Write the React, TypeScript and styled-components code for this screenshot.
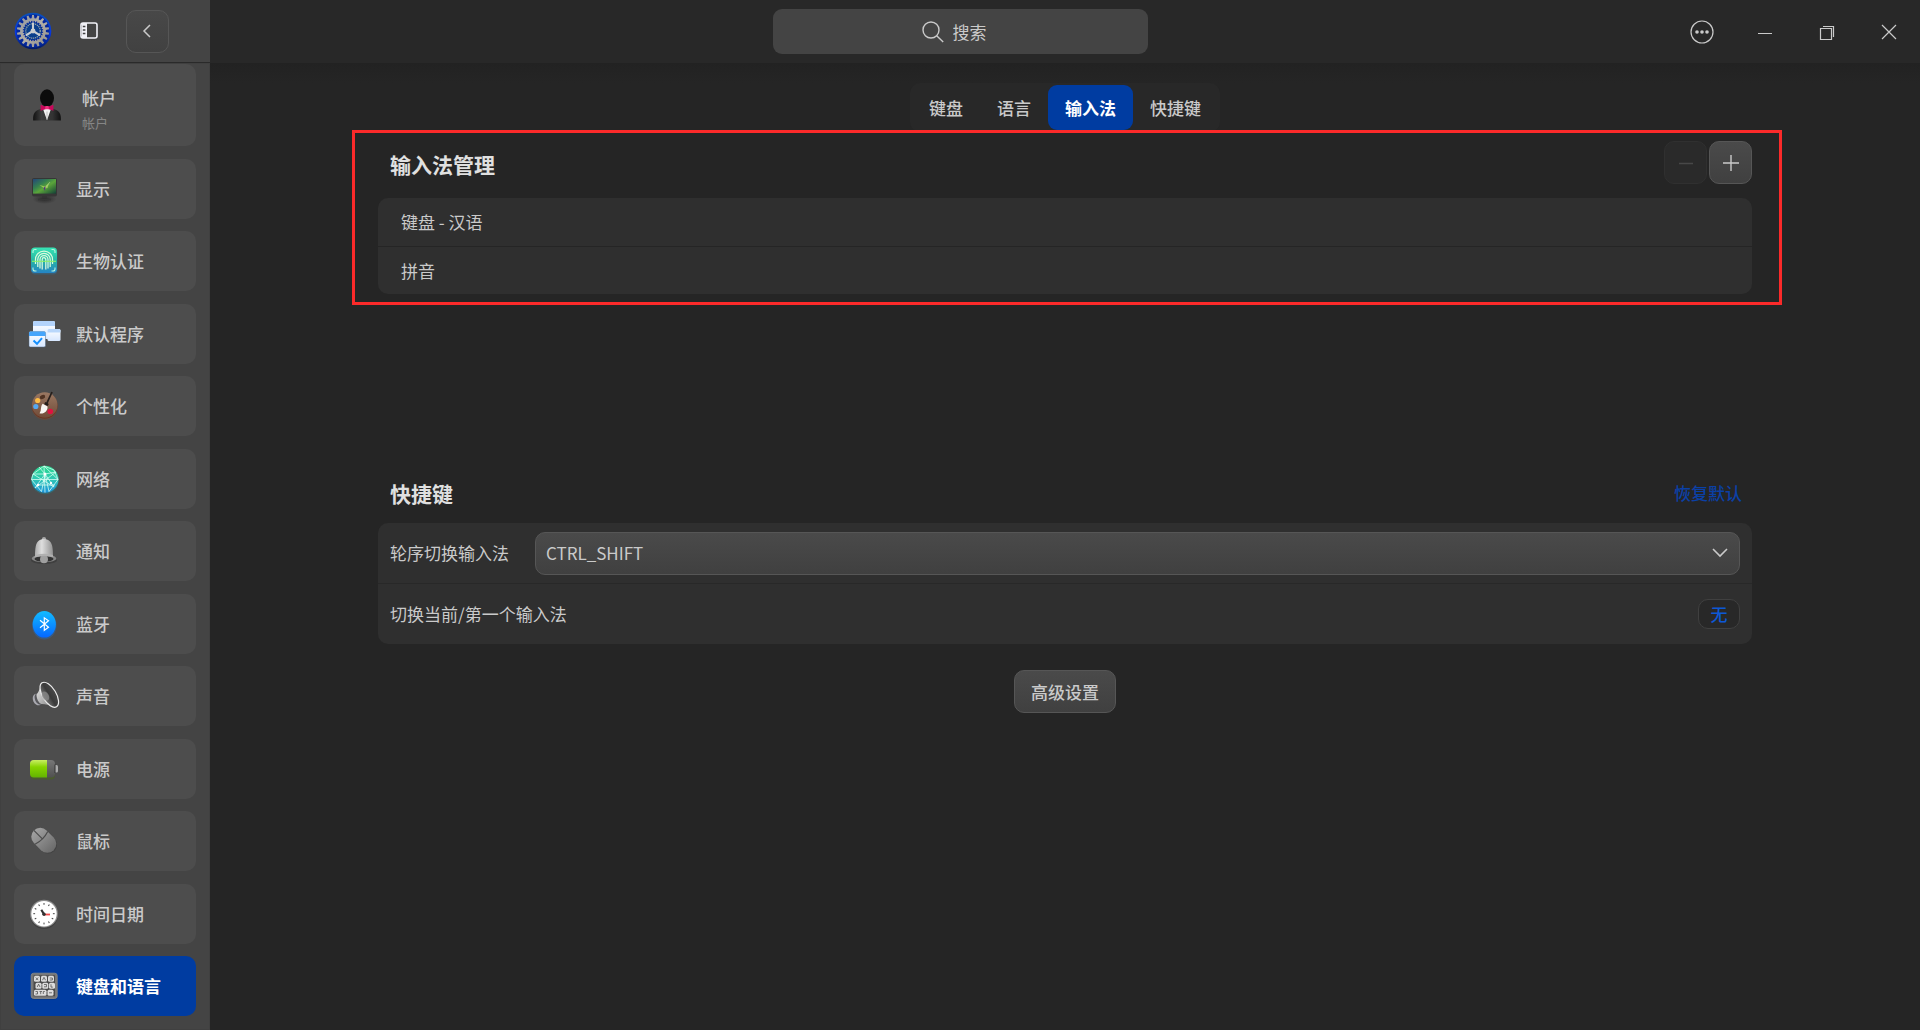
import React from "react";
import styled, { createGlobalStyle, css } from "styled-components";

const color = {
  page: "#252525",
  bar: "#282828",
  side: "#444444",
  card: "#4d4d4d",
  panel: "#2f2f2f",
  accent: "#003ca1",
  text: "#cacaca",
  heading: "#e0e0e0",
};

const GlobalStyle = createGlobalStyle`
  * { box-sizing: border-box; }
  body {
    margin: 0;
    background: ${color.page};
    color: ${color.text};
    font: 17px/26px "Noto Sans CJK SC", "Noto Sans", sans-serif;
  }
  button, input, select { font: inherit; color: inherit; margin: 0; }
  button { padding: 0; border: 0; background: none; cursor: pointer; }
  svg { display: block; overflow: visible; flex: none; }
`;

const Window = styled.div`
  display: flex;
  flex-direction: column;
  min-height: 100vh;
`;

const TopBar = styled.header`
  display: grid;
  grid-template-columns: 1fr 375px 1fr;
  align-items: center;
  height: 63px;
  background: ${color.bar};
`;

const SideTools = styled.div`
  display: flex;
  align-items: center;
  gap: 10px;
  width: 210px;
  height: 63px;
  padding: 0 14px;
  background: ${color.side};
  border-bottom: 1px solid #2a2a2a;
`;

const ToolButton = styled.button`
  display: grid;
  place-items: center;
  width: 54px;
  height: 42px;
`;

const gradientFrame = css`
  border: 1px solid #565656;
  border-radius: 10px;
  background: linear-gradient(#4a4a4a, #404040);
`;

const SquareButton = styled.button`
  display: grid;
  place-items: center;
  width: 43px;
  height: 43px;
  ${gradientFrame}
  &:disabled {
    border-color: #303030;
    background: #2a2a2a;
    color: #484848;
    cursor: default;
  }
`;

const BackButton = styled(SquareButton)`
  background: linear-gradient(#484848, #414141);
`;

const SearchBox = styled.label`
  display: flex;
  align-items: center;
  justify-content: center;
  gap: 9px;
  height: 45px;
  padding-right: 10px;
  border-radius: 9px;
  background: ${color.side};
  cursor: text;
`;

const SearchInput = styled.input`
  width: 36px;
  padding: 0;
  border: 0;
  outline: 0;
  background: none;
  &::placeholder { color: ${color.text}; opacity: 1; }
`;

const WindowControls = styled.div`
  display: flex;
  justify-content: flex-end;
`;

const ControlButton = styled.button`
  display: grid;
  place-items: center;
  width: 62px;
  height: 62px;
`;

const Body = styled.div`
  display: flex;
  flex: 1;
`;

const SideNav = styled.nav`
  display: flex;
  flex-direction: column;
  justify-content: space-between;
  gap: 8px;
  width: 210px;
  padding: 1px 14px 14px;
  background: ${color.side};
  box-shadow: inset 0 0 0 1px #404040;
`;

const NavItem = styled.a<{ $active?: boolean; $tall?: boolean }>`
  display: flex;
  align-items: center;
  gap: 16px;
  height: ${(p) => (p.$tall ? 82 : 60)}px;
  padding: 0 14px;
  border-radius: 10px;
  background: ${(p) => (p.$active ? color.accent : color.card)};
  color: ${(p) => (p.$active ? "#fff" : color.text)};
  font-weight: ${(p) => (p.$active ? 700 : 500)};
  text-decoration: none;
  white-space: nowrap;
`;

const AccountText = styled.span`
  display: flex;
  flex-direction: column;
  padding-top: 10px;
`;

const AccountNote = styled.small`
  color: #868686;
  font-size: 13px;
  font-weight: 400;
  line-height: 24px;
`;

const Content = styled.main`
  flex: 1;
  display: flex;
  flex-direction: column;
  align-items: center;
  padding: 20px 168px;
  background: linear-gradient(#222222, ${color.page} 20px);
`;

const TabList = styled.div`
  display: flex;
  padding: 2px;
  border-radius: 10px;
  background: #282828;
`;

const Tab = styled.button<{ $active?: boolean }>`
  height: 45px;
  padding: 0 17px;
  border-radius: 9px;
  font-weight: 500;
  ${(p) => p.$active && css`
    background: ${color.accent};
    color: #fff;
    font-weight: 700;
  `}
`;

const Section = styled.section`
  align-self: stretch;
`;

const MethodSection = styled(Section)`
  position: relative;
  min-height: 341px;
  padding-top: 9px;
`;

const Highlight = styled.div`
  position: absolute;
  inset: -2px -30px auto -26px;
  height: 175px;
  border: 3px solid #fb2a2a;
  pointer-events: none;
`;

const SectionHead = styled.div<{ $gap: number }>`
  display: flex;
  align-items: flex-end;
  justify-content: space-between;
  padding-left: 12px;
  margin-bottom: ${(p) => p.$gap}px;
`;

const Heading = styled.h2`
  margin: 0;
  color: ${color.heading};
  font-size: 21px;
  font-weight: 700;
  line-height: 40px;
`;

const ButtonPair = styled.div`
  display: flex;
  gap: 2px;
`;

const RestoreButton = styled.button`
  padding-right: 10px;
  color: #0b40a6;
  font-weight: 500;
  line-height: 40px;
`;

const Panel = styled.div`
  border-radius: 10px;
  background: ${color.panel};
`;

const MethodList = styled.ul`
  margin: 0;
  padding: 0;
  list-style: none;
  border-radius: 10px;
  background: ${color.panel};
`;

const MethodItem = styled.li`
  height: 48px;
  padding: 11px 23px;
  & + & { border-top: 1px solid #252525; }
`;

const SettingRow = styled.div`
  display: flex;
  align-items: center;
  justify-content: space-between;
  gap: 26px;
  height: 60px;
  padding: 0 12px;
  & + & {
    height: 61px;
    border-top: 1px solid #282828;
  }
`;

const SelectWrap = styled.div`
  position: relative;
  flex: 1;
  color: ${color.text};
`;

const Select = styled.select`
  display: block;
  width: 100%;
  height: 43px;
  padding: 0 40px 0 10px;
  appearance: none;
  ${gradientFrame}
`;

const SelectArrow = styled.svg`
  position: absolute;
  right: 13px;
  top: 16px;
  pointer-events: none;
`;

const KeyButton = styled.button`
  width: 42px;
  height: 30px;
  border: 1px solid #404040;
  border-radius: 10px;
  background: #282828;
  color: #0d58d6;
  font-weight: 500;
`;

const AdvancedButton = styled.button`
  height: 43px;
  margin-top: 26px;
  padding: 0 16px;
  font-weight: 500;
  ${gradientFrame}
`;

/* ---- icons ---- */

const Icon = ({ size = 32, children }: { size?: number; children: React.ReactNode }) => (
  <svg width={size} height={size} viewBox="0 0 32 32" aria-hidden="true">{children}</svg>
);

const Line = ({ size, d, width = 1.3 }: { size: number; d: string; width?: number }) => (
  <svg width={size} height={size} viewBox={`0 0 ${size} ${size}`} fill="none" stroke="currentColor" strokeWidth={width} aria-hidden="true">
    <path d={d} />
  </svg>
);

const gearPath = (teeth: number, outer: number, inner: number) => {
  const points: string[] = [];
  for (let i = 0; i < teeth; i++) {
    const steps: [number, number][] = [[-0.3, inner], [-0.17, outer], [0.17, outer], [0.3, inner]];
    steps.forEach(([t, r]) => {
      const a = ((i + t) / teeth) * Math.PI * 2 - Math.PI / 2;
      points.push(`${(20 + r * Math.cos(a)).toFixed(2)} ${(20 + r * Math.sin(a)).toFixed(2)}`);
    });
  }
  return `M${points.join("L")}Z`;
};

const Logo = () => (
  <svg width="38" height="38" viewBox="0 0 40 40" role="img" aria-label="控制中心">
    <defs>
      <linearGradient id="logoRim" x1="0" y1="0" x2="0" y2="1">
        <stop offset="0" stopColor="#0a50b4" /><stop offset=".55" stopColor="#0838e0" /><stop offset="1" stopColor="#021a60" />
      </linearGradient>
      <linearGradient id="logoMetal" x1="0" y1="0" x2="1" y2="1">
        <stop offset="0" stopColor="#8e949c" /><stop offset=".5" stopColor="#b3b0a8" /><stop offset="1" stopColor="#8b8986" />
      </linearGradient>
    </defs>
    <circle cx="20" cy="20" r="19.3" fill="url(#logoRim)" />
    <circle cx="20" cy="20" r="17.4" fill="#04279c" />
    <path fillRule="evenodd" fill="url(#logoMetal)" d={gearPath(18, 17, 13.6) + gearPath(24, 9.4, 10.8)} />
    <circle cx="20" cy="20" r="9.2" fill="#0a3f8c" />
    <circle cx="20" cy="20" r="7.6" fill="none" stroke="#9ba3ab" strokeWidth="1.3" strokeDasharray="1.3 .8" />
    <path d="M20 20V11M20 20l-7.5 4.500M20 20l7.500 4.500" stroke="#c9cdd0" strokeWidth="2.2" />
    <circle cx="20" cy="20" r="2.6" fill="#c9cdd0" />
  </svg>
);

const PanelIcon = () => (
  <svg width="18" height="18" viewBox="0 0 18 18" aria-hidden="true">
    <rect x="1" y="1" width="16" height="15" rx="2" fill="none" stroke="#f2f2f8" strokeWidth="1.6" />
    <path d="M2 1h5v15H2z" fill="#f2f2f8" />
    <path d="M2.8 4.500h2.600M2.800 8h2.600M2.800 11.500h2.600" stroke="#444" strokeWidth="1.4" />
  </svg>
);

const AccountIcon = () => (
  <Icon size={38}>
    <defs><linearGradient id="suit" x1="0" y1="0" x2="1" y2="0"><stop offset="0" stopColor="#111" /><stop offset=".3" stopColor="#3c3c3c" /><stop offset=".7" stopColor="#333" /><stop offset="1" stopColor="#111" /></linearGradient></defs>
    <path d="M4.300 29C4 23 6 20.600 11 19.200h10C26 20.600 28 23 27.700 29Z" fill="url(#suit)" />
    <path d="M12.500 19h7L16 28.800Z" fill="#f3f3f3" />
    <path d="M16 21.500v7" stroke="#aaa" strokeWidth=".6" />
    <ellipse cx="16" cy="10.200" rx="5.900" ry="7.400" fill="#0c0c0c" />
    <path d="M10.600 15.800l5.400 2 5.400-2v5L16 19.200l-5.400 1.600Z" fill="#c8085a" />
    <rect x="14.500" y="16.800" width="3" height="2.800" rx=".6" fill="#f0307e" />
  </Icon>
);

const DisplayIcon = () => (
  <Icon>
    <defs>
      <linearGradient id="screen" x1="0" y1="0" x2="1" y2="1"><stop offset="0" stopColor="#24457a" /><stop offset=".35" stopColor="#35804f" /><stop offset=".55" stopColor="#5ba53a" /><stop offset="1" stopColor="#123f36" /></linearGradient>
      <radialGradient id="base"><stop offset="0" stopColor="#222" stopOpacity=".8" /><stop offset="1" stopColor="#222" stopOpacity="0" /></radialGradient>
    </defs>
    <ellipse cx="16.500" cy="26" rx="12" ry="5" fill="url(#base)" />
    <path d="M14 22h5v3.500h-5z" fill="#333" />
    <path d="M10 26.500h13" stroke="#363636" strokeWidth="1.400" />
    <rect x="4" y="5" width="25" height="18.500" rx="2" fill="#363636" />
    <rect x="5" y="6" width="23" height="14.600" fill="url(#screen)" />
    <path d="M11.500 12l5.500 1.500 4-3.500-1.500 5-3 .5Z" fill="#9ccb55" />
    <path d="M17.500 13l-.5 5-1.500-3Z" fill="#56308a" />
    <path d="M18 14l4-5" stroke="#a8c890" strokeWidth=".7" />
  </Icon>
);

const BiometricIcon = () => (
  <Icon>
    <defs><linearGradient id="bio" x1="0" y1="0" x2="0" y2="1"><stop offset="0" stopColor="#37e5b5" /><stop offset=".5" stopColor="#27b6a4" /><stop offset="1" stopColor="#2584c6" /></linearGradient></defs>
    <rect x="3" y="3.500" width="26.400" height="26" rx="4" fill="#2478ac" opacity=".35" />
    <rect x="3" y="2.500" width="26" height="25.500" rx="4" fill="url(#bio)" />
    <path d="M5 8V6.500q0-2 2-2h1.500M27 8V6.500q0-2-2-2h-1.500M5 22.500V24q0 2 2 2h1.500M27 22.500V24q0 2-2 2h-1.500" fill="none" stroke="#b8f5df" strokeWidth="1.100" />
    <g fill="none" stroke="#d9fbdc" strokeWidth="1.250">
      <path d="M7.500 19v-4.500a8.500 8.500 0 0 1 17 0V19" />
      <path d="M9.800 22v-7.500a6.200 6.200 0 0 1 12.400 0V22" />
      <path d="M12 23.500v-9a4 4 0 0 1 8 0v9" />
      <path d="M14.200 24.500v-10a1.800 1.800 0 0 1 3.600 0v10" />
    </g>
    <path d="M4 16.300h24" stroke="#8df06a" strokeWidth="1.100" />
  </Icon>
);

const DefaultAppsIcon = () => (
  <Icon>
    <defs><linearGradient id="win" x1="0" y1="0" x2="0" y2="1"><stop offset="0" stopColor="#fff" /><stop offset="1" stopColor="#d7e7ff" /></linearGradient></defs>
    <rect x="5" y="3" width="22" height="18" rx="1.500" fill="url(#win)" />
    <path d="M5 8V4.500Q5 3 6.500 3h19Q27 3 27 4.500V8Z" fill="#b3d3fb" />
    <rect x="19.500" y="11" width="13" height="12" rx="1.500" fill="url(#win)" />
    <path d="M19.500 14.500v-2q0-1.500 1.500-1.500h10q1.500 0 1.500 1.500v2Z" fill="#b9d7fb" />
    <rect x="1" y="13.500" width="16.500" height="15.500" rx="1.500" fill="url(#win)" stroke="#4d6580" strokeWidth=".5" />
    <path d="M1 18v-3q0-1.500 1.500-1.500H16q1.500 0 1.500 1.500v3Z" fill="#46a5fb" />
    <path d="M5.500 22.500l3.500 3.300 5-5.600" fill="none" stroke="#1590ff" strokeWidth="2" />
  </Icon>
);

const PaletteIcon = () => (
  <Icon>
    <defs><linearGradient id="wood" x1="0" y1="0" x2="0" y2="1"><stop offset="0" stopColor="#9a7862" /><stop offset="1" stopColor="#704b38" /></linearGradient></defs>
    <circle cx="16.700" cy="17" r="13" fill="#a04318" opacity=".25" />
    <circle cx="16.700" cy="15.700" r="12.800" fill="#70301a" />
    <circle cx="16.700" cy="15" r="12.800" fill="url(#wood)" />
    <ellipse cx="14.500" cy="7" rx="2.800" ry="2" fill="#503323" transform="rotate(-25 14.500 7)" />
    <circle cx="9.700" cy="10.500" r="2.600" fill="#ffbd45" />
    <circle cx="7.800" cy="16.500" r="2.600" fill="#57a9f0" />
    <circle cx="22.300" cy="21.500" r="2.800" fill="#df1340" />
    <path d="M18.500 14L24 2" stroke="#27201d" strokeWidth="1.800" />
    <path d="M17.300 12l3.500 1.900-1.200 2.200-3.500-1.900Z" fill="#221c1a" />
    <path d="M14.700 13.800l4.800 2.700c.500 4-2.900 7.600-7.500 7-1-.200.300-.900.700-3 .5-2.900.4-5.500 2-6.700Z" fill="#f8f6f3" />
  </Icon>
);

const NetworkIcon = () => (
  <Icon>
    <defs><linearGradient id="net" x1="0" y1="0" x2="0" y2="1"><stop offset="0" stopColor="#2bd98d" /><stop offset=".5" stopColor="#2fc7b4" /><stop offset="1" stopColor="#1b93dd" /></linearGradient></defs>
    <circle cx="17" cy="17.500" r="13.800" fill="#1599a0" opacity=".3" />
    <circle cx="17" cy="16.300" r="13.500" fill="url(#net)" />
    <path d="M16 3L5 11l-1.500 5.500H30L16 3ZM16 3l1 26.500M5 11l12 0 11-2M17 11L7 25M17 11l9 13M5 11l21 13M28 9L7 25M3.500 16.500l10 12M30 16.500l-9 12L17 11M16 3l10 4 4 9.500M13.500 28.500L17 11l-6-7M9 22h18" fill="none" stroke="#d8fff4" strokeWidth=".9" opacity=".85" />
    <circle cx="17" cy="11" r="1.500" fill="#fff" /><circle cx="10" cy="22" r="1.200" fill="#fff" /><circle cx="23" cy="20" r="1.200" fill="#fff" />
  </Icon>
);

const BellIcon = () => (
  <Icon>
    <defs><linearGradient id="bell" x1="0" y1="0" x2="1" y2="0"><stop offset="0" stopColor="#9d9d9d" /><stop offset=".4" stopColor="#dedede" /><stop offset="1" stopColor="#858585" /></linearGradient></defs>
    <ellipse cx="16" cy="25.500" rx="13" ry="3.500" fill="#222" opacity=".3" />
    <circle cx="16" cy="4" r="2.100" fill="#aaa" />
    <ellipse cx="16" cy="23.500" rx="12.200" ry="3.800" fill="#888" />
    <ellipse cx="16" cy="24" rx="9.500" ry="2.700" fill="#333" />
    <path d="M7 20.500c0-3 .2-6.500.8-9.500C8.700 6.500 12 4 16 4s7.300 2.500 8.200 7c.6 3 .8 6.500.8 9.500 0 1 1 2 2 2.500-3-1.300-6-2-11-2s-8 .7-11 2c1-.5 2-1.500 2-2.500Z" fill="url(#bell)" />
    <circle cx="16" cy="24.200" r="4" fill="#a0a0a0" />
    <path d="M7 20q9-2.500 18 0v2q-9-2.500-18 0Z" fill="#b0b0b0" />
  </Icon>
);

const BluetoothIcon = () => (
  <Icon>
    <defs><linearGradient id="bt" x1="0" y1="0" x2="0" y2="1"><stop offset="0" stopColor="#12bcff" /><stop offset="1" stopColor="#0567ff" /></linearGradient></defs>
    <ellipse cx="16.300" cy="17.500" rx="12.200" ry="14" fill="#1a78e0" opacity=".3" />
    <ellipse cx="16.300" cy="16.300" rx="11.600" ry="13.300" fill="url(#bt)" />
    <path d="M12 12.300l8.500 7-4.200 3V9.800l4.200 3L12 19.800" fill="none" stroke="#fff" strokeWidth="1.200" />
  </Icon>
);

const SoundIcon = () => (
  <Icon>
    <defs>
      <linearGradient id="horn" x1="0" y1="0" x2="1" y2="1"><stop offset="0" stopColor="#eee" /><stop offset="1" stopColor="#777" /></linearGradient>
      <linearGradient id="cone" x1="0" y1="0" x2="1" y2="0"><stop offset="0" stopColor="#777" /><stop offset=".5" stopColor="#3a3a3a" /><stop offset="1" stopColor="#494949" /></linearGradient>
    </defs>
    <ellipse cx="9.500" cy="19.500" rx="4.500" ry="6" fill="#a9a9b0" transform="rotate(-25 9.500 19.500)" />
    <ellipse cx="11" cy="19" rx="4" ry="6" fill="#58585c" transform="rotate(-25 11 19)" />
    <path d="M13.500 2.500C12 8 11.500 11 8.500 14.500c0 4 2 8.500 5 9.500 4 .2 9 1 14 3.500Z" fill="url(#horn)" />
    <ellipse cx="21.300" cy="14.800" rx="6.800" ry="14" fill="url(#cone)" stroke="#ececec" strokeWidth="1.200" transform="rotate(-31 21.300 14.800)" />
    <ellipse cx="17.500" cy="16" rx="3.200" ry="5" fill="#888" opacity=".8" transform="rotate(-31 17.500 16)" />
  </Icon>
);

const BatteryIcon = () => (
  <Icon>
    <defs>
      <linearGradient id="charge" x1="0" y1="0" x2="0" y2="1"><stop offset="0" stopColor="#c9ee63" /><stop offset=".4" stopColor="#86d400" /><stop offset="1" stopColor="#63b400" /></linearGradient>
      <linearGradient id="shell" x1="0" y1="0" x2="0" y2="1"><stop offset="0" stopColor="#777" /><stop offset="1" stopColor="#505050" /></linearGradient>
    </defs>
    <rect x="2" y="9" width="25" height="17.500" rx="4" fill="#477000" opacity=".4" />
    <rect x="2" y="7" width="25" height="17.500" rx="4" fill="url(#shell)" />
    <path d="M19 7H6Q2 7 2 11v9.500Q2 24.500 6 24.500h13Z" fill="url(#charge)" />
    <path d="M27 12h1.500q1.500 0 1.500 1.500v4.500q0 1.500-1.500 1.500H27Z" fill="#aaa" />
    <path d="M27 11.500v8.500" stroke="#333" strokeWidth="1" />
  </Icon>
);

const MouseIcon = () => (
  <Icon>
    <defs><linearGradient id="mouse" x1="0" y1="0" x2="0" y2="1"><stop offset="0" stopColor="#a2a2a2" /><stop offset="1" stopColor="#6b6b6b" /></linearGradient></defs>
    <g transform="rotate(-45 16 15.500)">
      <rect x="7" y="2.200" width="18" height="28" rx="9" fill="#333" opacity=".4" />
      <rect x="7" y="1.200" width="18" height="28" rx="9" fill="url(#mouse)" />
      <path d="M7 11.800q9 3 18 0M16 1.200v12" fill="none" stroke="#4b4b4b" strokeWidth="1.200" />
    </g>
  </Icon>
);

const ClockIcon = () => (
  <Icon>
    <circle cx="16" cy="17" r="14" fill="#222" opacity=".3" />
    <circle cx="16" cy="15.700" r="13.900" fill="#8c8c8c" />
    <circle cx="16" cy="15.700" r="12.700" fill="#fff" />
    {Array.from({ length: 12 }, (_, i) => (
      <path key={i} d="M16 5v1.800" stroke="#444" strokeWidth="1" transform={`rotate(${i * 30} 16 15.700)`} />
    ))}
    <path d="M16 16.300L13.300 11.800" stroke="#333" strokeWidth="2.200" />
    <path d="M16 16.500h6" stroke="#f24b4b" strokeWidth="1.800" />
    <circle cx="16" cy="16.300" r="1.700" fill="#333" />
  </Icon>
);

const KeyboardIcon = () => (
  <Icon>
    <rect x="3.200" y="4" width="26" height="25.500" rx="2.500" fill="#02235b" opacity=".5" />
    <rect x="3.200" y="3.200" width="26" height="25.300" rx="2.500" fill="#777" stroke="#8d8a84" strokeWidth=".8" />
    <rect x="5.500" y="5.300" width="21.500" height="21" fill="#4a4a4a" />
    <g fill="#dcdcdc">
      {[[6, 5.8], [13, 5.8], [20, 5.8], [7.5, 12.7], [14.3, 12.7], [21, 12.7], [19.5, 19.7]].map(([x, y]) => (
        <rect key={`${x}-${y}`} x={x} y={y} width="6" height="6" rx="1.500" />
      ))}
      <rect x="6" y="19.700" width="12.500" height="6" rx="1.500" />
    </g>
    <path d="M7.800 7.500l2.400 2.600M10.200 7.500l-2.400 2.600M14.500 10.200L16 7.300l1.500 2.900M21.800 8h2.600v2h-2.600M9.200 17l1.400-2.800 1.400 2.800M16 14.500h2.500v2.300H16M23 14.300v2.800h1.800M7.500 21.500h2v2.500h-2M11.500 21.500h2.500M12.700 21.500v2.700M15.300 24v-2.500h1.500M21 22.800h3" fill="none" stroke="#555" strokeWidth=".8" />
  </Icon>
);

const navItems = [
  { name: "显示", icon: <DisplayIcon /> },
  { name: "生物认证", icon: <BiometricIcon /> },
  { name: "默认程序", icon: <DefaultAppsIcon /> },
  { name: "个性化", icon: <PaletteIcon /> },
  { name: "网络", icon: <NetworkIcon /> },
  { name: "通知", icon: <BellIcon /> },
  { name: "蓝牙", icon: <BluetoothIcon /> },
  { name: "声音", icon: <SoundIcon /> },
  { name: "电源", icon: <BatteryIcon /> },
  { name: "鼠标", icon: <MouseIcon /> },
  { name: "时间日期", icon: <ClockIcon /> },
  { name: "键盘和语言", icon: <KeyboardIcon />, active: true },
];

const tabs = ["键盘", "语言", "输入法", "快捷键"];
const methods = ["键盘 - 汉语", "拼音"];

export default function App() {
  return (
    <Window>
      <GlobalStyle />
      <TopBar>
        <SideTools>
          <Logo />
          <ToolButton aria-label="侧边栏"><PanelIcon /></ToolButton>
          <BackButton aria-label="返回"><Line size={16} width={1.5} d="M10 2L4 8l6 6" /></BackButton>
        </SideTools>
        <SearchBox>
          <svg width="22" height="22" viewBox="0 0 22 22" fill="none" stroke={color.text} strokeWidth="1.4" aria-hidden="true">
            <circle cx="9" cy="9" r="8" /><path d="M14.700 14.700l6.500 6.300" />
          </svg>
          <SearchInput type="text" aria-label="搜索" placeholder="搜索" />
        </SearchBox>
        <WindowControls>
          <ControlButton aria-label="菜单">
            <svg width="24" height="24" viewBox="0 0 24 24" aria-hidden="true">
              <circle cx="11" cy="12" r="11" fill="none" stroke="currentColor" strokeWidth="1.200" />
              <circle cx="6" cy="12" r="1.800" fill="currentColor" /><circle cx="11" cy="12" r="1.800" fill="currentColor" /><circle cx="16" cy="12" r="1.800" fill="currentColor" />
            </svg>
          </ControlButton>
          <ControlButton aria-label="最小化"><Line size={16} width={1} d="M1 9.500h14" /></ControlButton>
          <ControlButton aria-label="还原"><Line size={16} width={1.2} d="M1.500 4.500h11v11h-11zM4 2.500h10.500V13" /></ControlButton>
          <ControlButton aria-label="关闭"><Line size={16} width={1.2} d="M1 1l14 14M15 1L1 15" /></ControlButton>
        </WindowControls>
      </TopBar>
      <Body>
        <SideNav>
          <NavItem href="#account" $tall>
            <AccountIcon />
            <AccountText>帐户<AccountNote>帐户</AccountNote></AccountText>
          </NavItem>
          {navItems.map((item) => (
            <NavItem key={item.name} href={`#${item.name}`} $active={item.active}>
              {item.icon}
              {item.name}
            </NavItem>
          ))}
        </SideNav>
        <Content>
          <TabList role="tablist">
            {tabs.map((name) => (
              <Tab key={name} role="tab" aria-selected={name === "输入法"} $active={name === "输入法"}>{name}</Tab>
            ))}
          </TabList>
          <MethodSection>
            <SectionHead $gap={14}>
              <Heading>输入法管理</Heading>
              <ButtonPair>
                <SquareButton aria-label="删除" disabled><Line size={16} width={1.5} d="M1 8.500h14" /></SquareButton>
                <SquareButton aria-label="添加"><Line size={16} width={1.4} d="M0 8h16M8 0v16" /></SquareButton>
              </ButtonPair>
            </SectionHead>
            <MethodList>
              {methods.map((name) => <MethodItem key={name}>{name}</MethodItem>)}
            </MethodList>
            <Highlight />
          </MethodSection>
          <Section>
            <SectionHead $gap={10}>
              <Heading>快捷键</Heading>
              <RestoreButton>恢复默认</RestoreButton>
            </SectionHead>
            <Panel>
              <SettingRow>
                <label htmlFor="switch-key">轮序切换输入法</label>
                <SelectWrap>
                  <Select id="switch-key" defaultValue="CTRL_SHIFT">
                    <option>CTRL_SHIFT</option>
                  </Select>
                  <SelectArrow width="14" height="10" viewBox="0 0 14 10" fill="none" stroke="currentColor" strokeWidth="1.600" aria-hidden="true">
                    <path d="M0 1l7 7 7-7" />
                  </SelectArrow>
                </SelectWrap>
              </SettingRow>
              <SettingRow>
                <span>切换当前/第一个输入法</span>
                <KeyButton>无</KeyButton>
              </SettingRow>
            </Panel>
          </Section>
          <AdvancedButton>高级设置</AdvancedButton>
        </Content>
      </Body>
    </Window>
  );
}
